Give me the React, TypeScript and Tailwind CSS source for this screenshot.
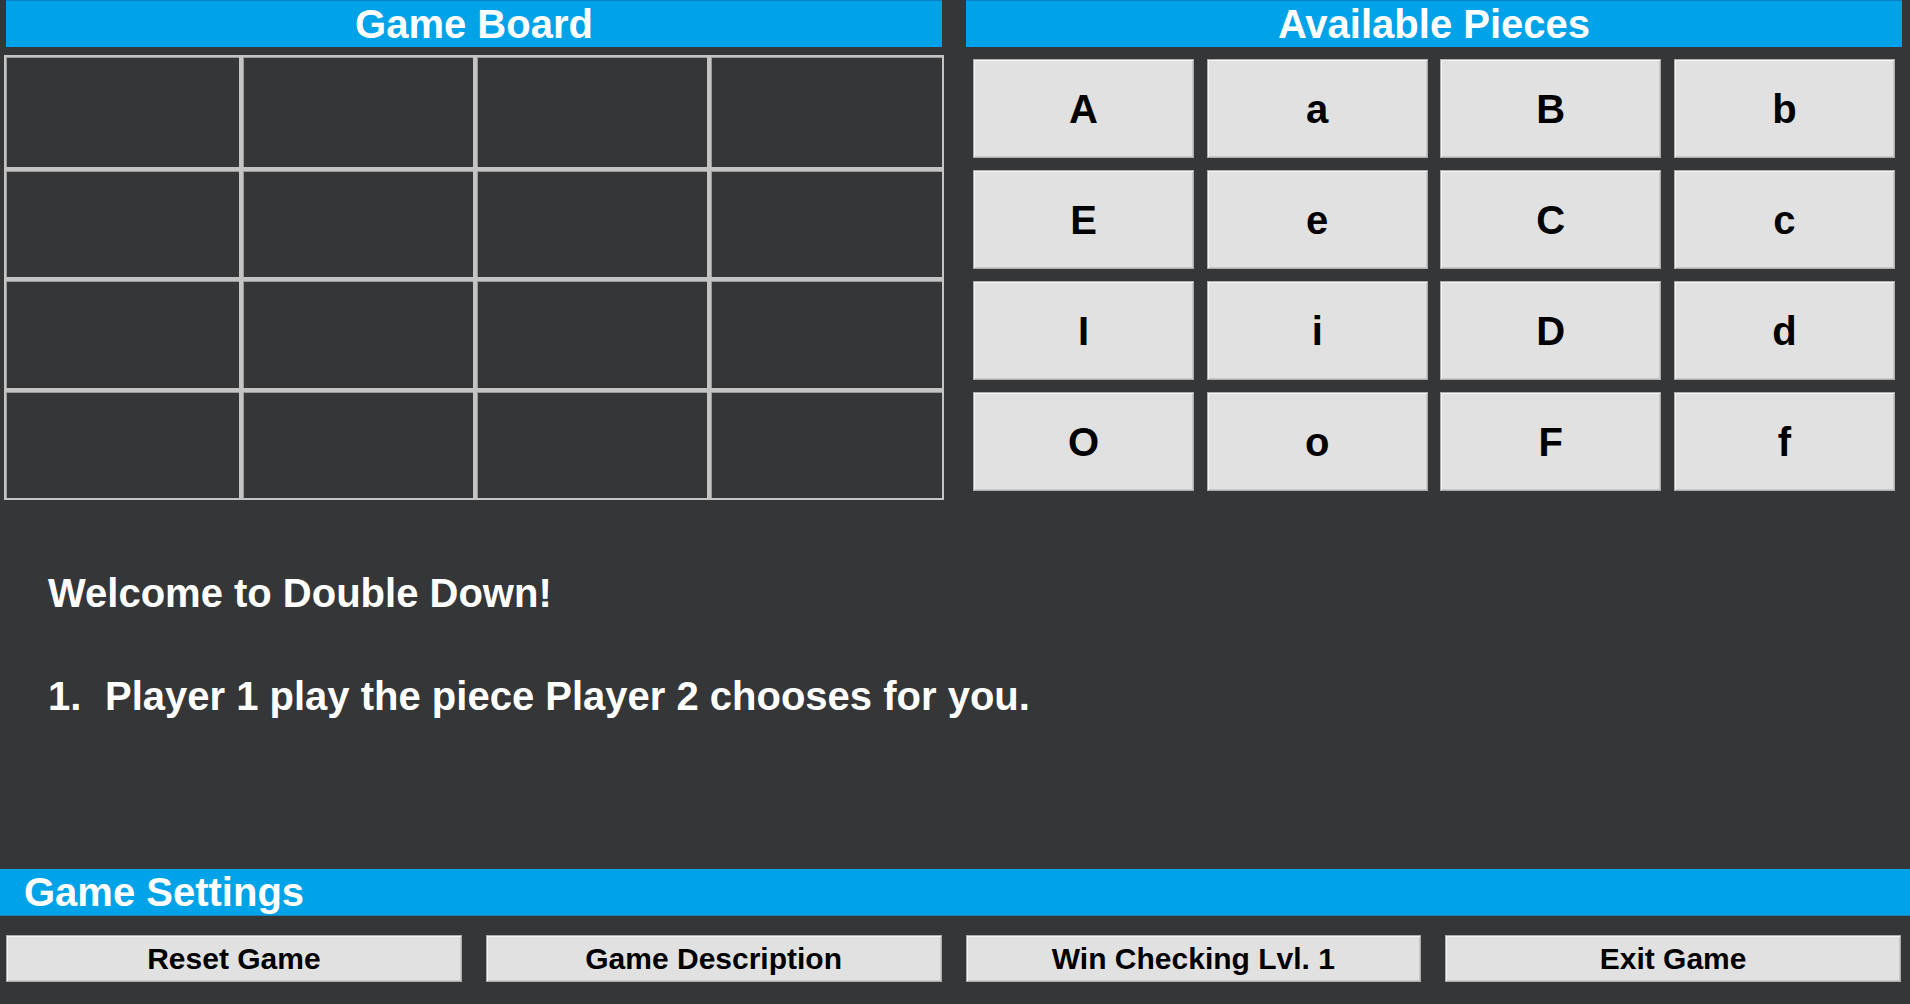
import React from "react";

const pieces = ["A", "a", "B", "b", "E", "e", "C", "c", "I", "i", "D", "d", "O", "o", "F", "f"];
const buttons = ["Reset Game", "Game Description", "Win Checking Lvl. 1", "Exit Game"];
const rowHeights = ["h-[114px]", "h-[110px]", "h-[111px]", "h-[110px]"];

export default function App() {
  return (
    <div
      className="w-[1910px] h-[1004px] bg-[#353638] flex flex-col overflow-hidden"
      style={{ fontFamily: '"Liberation Sans", Arial, sans-serif' }}
    >
      <div className="flex">
        <div className="ml-[4px] w-[940px] flex flex-col">
          <div className="mx-[2px] h-[47px] bg-[#00a2e8] border-t border-[#0b7fc0] flex items-center justify-center text-white font-bold text-[40px] leading-none">
            Game Board
          </div>
          <div className="mt-[8px] grid grid-cols-[237px_234px_234px_235px]">
            {Array.from({ length: 16 }).map((_, i) => (
              <div
                key={i}
                className={`${rowHeights[Math.floor(i / 4)]} border-2 border-[#c4c4c4] shadow-[inset_1px_1px_0_#9a9a9a]`}
              />
            ))}
          </div>
        </div>
        <div className="ml-[22px] w-[936px] flex flex-col">
          <div className="h-[47px] bg-[#00a2e8] border-t border-[#0b7fc0] flex items-center justify-center text-white font-bold text-[40px] leading-none">
            Available Pieces
          </div>
          <div className="mt-[12px] px-[7px] grid grid-cols-4 gap-x-[12.5px] gap-y-[12px]">
            {pieces.map((p, i) => (
              <div
                key={i}
                className="h-[99px] bg-[#e1e1e1] border border-[#adadad] shadow-[inset_1px_1px_0_#f4f4f4,inset_-1px_-1px_0_#c8c8c8] flex items-center justify-center text-black font-bold text-[40px] leading-none"
              >
                {p}
              </div>
            ))}
          </div>
        </div>
      </div>

      <div className="ml-[48px] mt-[69px] text-white font-bold text-[40px] leading-[48px]">
        Welcome to Double Down!
      </div>
      <div className="ml-[48px] mt-[55px] text-white font-bold text-[40px] leading-[48px] flex">
        <span className="inline-block w-[57px]">1.</span>
        <span>Player 1 play the piece Player 2 chooses for you.</span>
      </div>

      <div className="mt-auto pb-[22px] flex flex-col">
        <div className="h-[47px] bg-[#00a2e8] border-b border-[#1a7fb5] flex items-center pl-[24px] text-white font-bold text-[40px] leading-none">
          Game Settings
        </div>
        <div className="mt-[19px] pl-[6px] pr-[9px] grid grid-cols-4 gap-x-[24px]">
          {buttons.map((b) => (
            <div
              key={b}
              className="h-[47px] bg-[#e1e1e1] border border-[#adadad] shadow-[inset_1px_1px_0_#f4f4f4,inset_-1px_-1px_0_#c8c8c8] flex items-center justify-center text-black font-bold text-[30px] leading-none"
            >
              {b}
            </div>
          ))}
        </div>
      </div>
    </div>
  );
}
